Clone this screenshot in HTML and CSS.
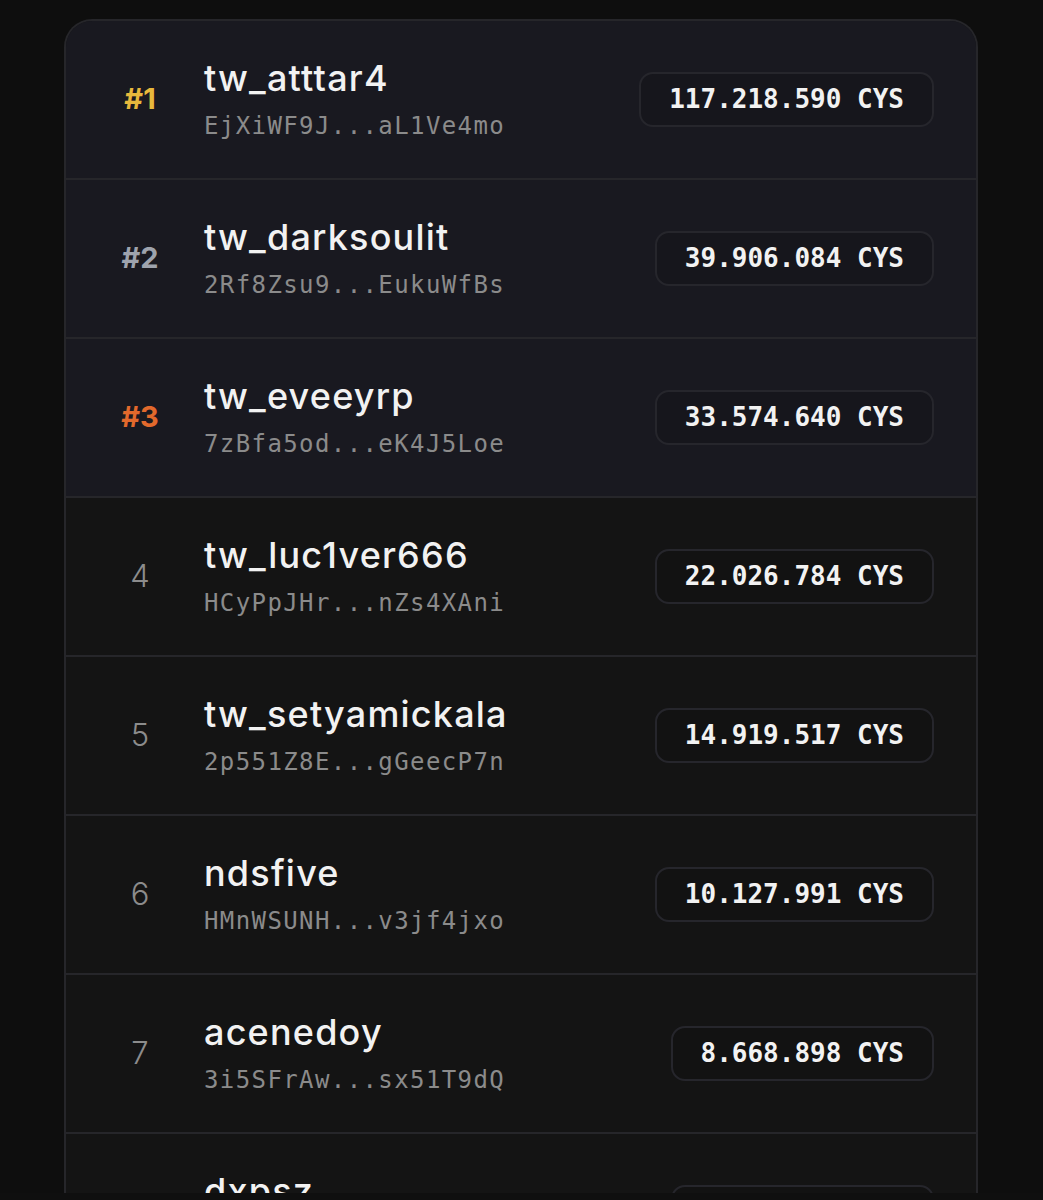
FILE: index.html
```html
<!DOCTYPE html>
<html lang="en">

<head>
    <meta charset="UTF-8">
    <meta name="viewport" content="width=device-width, initial-scale=1.0">
    <title>CYS Leaderboard</title>
    <link rel="stylesheet" href="styles.css">
</head>

<body>
    <div class="board">
        <div class="row top">
            <div class="rank gold">#1</div>
            <div class="who">
                <div class="name">tw_atttar4</div>
                <div class="addr">EjXiWF9J...aL1Ve4mo</div>
            </div>
            <div class="amount">117.218.590 CYS</div>
        </div>
        <div class="row top">
            <div class="rank silver">#2</div>
            <div class="who">
                <div class="name">tw_darksoulit</div>
                <div class="addr">2Rf8Zsu9...EukuWfBs</div>
            </div>
            <div class="amount">39.906.084 CYS</div>
        </div>
        <div class="row top">
            <div class="rank bronze">#3</div>
            <div class="who">
                <div class="name">tw_eveeyrp</div>
                <div class="addr">7zBfa5od...eK4J5Loe</div>
            </div>
            <div class="amount">33.574.640 CYS</div>
        </div>
        <div class="row">
            <div class="rank">4</div>
            <div class="who">
                <div class="name">tw_luc1ver666</div>
                <div class="addr">HCyPpJHr...nZs4XAni</div>
            </div>
            <div class="amount">22.026.784 CYS</div>
        </div>
        <div class="row">
            <div class="rank">5</div>
            <div class="who">
                <div class="name">tw_setyamickala</div>
                <div class="addr">2p551Z8E...gGeecP7n</div>
            </div>
            <div class="amount">14.919.517 CYS</div>
        </div>
        <div class="row">
            <div class="rank">6</div>
            <div class="who">
                <div class="name">ndsfive</div>
                <div class="addr">HMnWSUNH...v3jf4jxo</div>
            </div>
            <div class="amount">10.127.991 CYS</div>
        </div>
        <div class="row">
            <div class="rank">7</div>
            <div class="who">
                <div class="name">acenedoy</div>
                <div class="addr">3i5SFrAw...sx51T9dQ</div>
            </div>
            <div class="amount">8.668.898 CYS</div>
        </div>
        <div class="row">
            <div class="rank">8</div>
            <div class="who">
                <div class="name">dxpsz</div>
                <div class="addr">Fq2kLm8T...wP3nB7xc</div>
            </div>
            <div class="amount">7.104.552 CYS</div>
        </div>
    </div>

    <!-- bottom edge of the screen -->
    <div class="edge"></div>
</body>

</html>
```

FILE: styles.css
```css
body {
    margin: 0;
    background-color: #0e0e0e;
    font-family: Inter, "Noto Sans", sans-serif;
    color: #f2f2f2;
}

.board {
    width: 910px;
    margin: 19px 0 0 64px;
    background-color: #141414;
    border: 2px solid #26262a;
    border-bottom: none;
    border-radius: 28px 28px 0 0;
    overflow: hidden;
}

.row {
    display: grid;
    grid-template-columns: 128px 1fr auto;
    align-items: center;
    height: 157px;
    padding: 0 42px 0 10px;
    border-bottom: 2px solid #26262a;
}

.row.top {
    background-color: #191920; /* slightly blue for podium */
}

.rank {
    text-align: center;
    font-size: 31px;
    font-weight: 300;
    color: #8c8c8c;
    margin-top: -2px;
}

.rank.gold,
.rank.silver,
.rank.bronze {
    font-size: 29px;
    font-weight: 700;
}

.rank.gold {
    color: #e8b83c;
}

.rank.silver {
    color: #9ea3ad;
}

.rank.bronze {
    color: #e2692c;
}

.who {
    display: flex;
    flex-direction: column;
}

.name {
    font-size: 36px;
    font-weight: 500;
    line-height: 40px;
    letter-spacing: 1.2px;
}

.addr {
    font-family: "DejaVu Sans Mono", monospace;
    font-size: 24px;
    line-height: 30px;
    letter-spacing: 1.4px;
    color: #8b8b8b;
    margin-top: 13px;
}

.amount {
    font-family: "DejaVu Sans Mono", monospace;
    font-weight: 700;
    font-size: 26px;
    line-height: 51px;
    padding: 0 28px;
    border: 2px solid #26262c;
    border-radius: 14px;
    background-color: #121212;
}

.row.top .amount {
    background-color: #16161c;
}

.edge {
    position: fixed;
    left: 0;
    right: 0;
    bottom: 0;
    height: 7px;
    background-color: #0f0f0f;
}
```
